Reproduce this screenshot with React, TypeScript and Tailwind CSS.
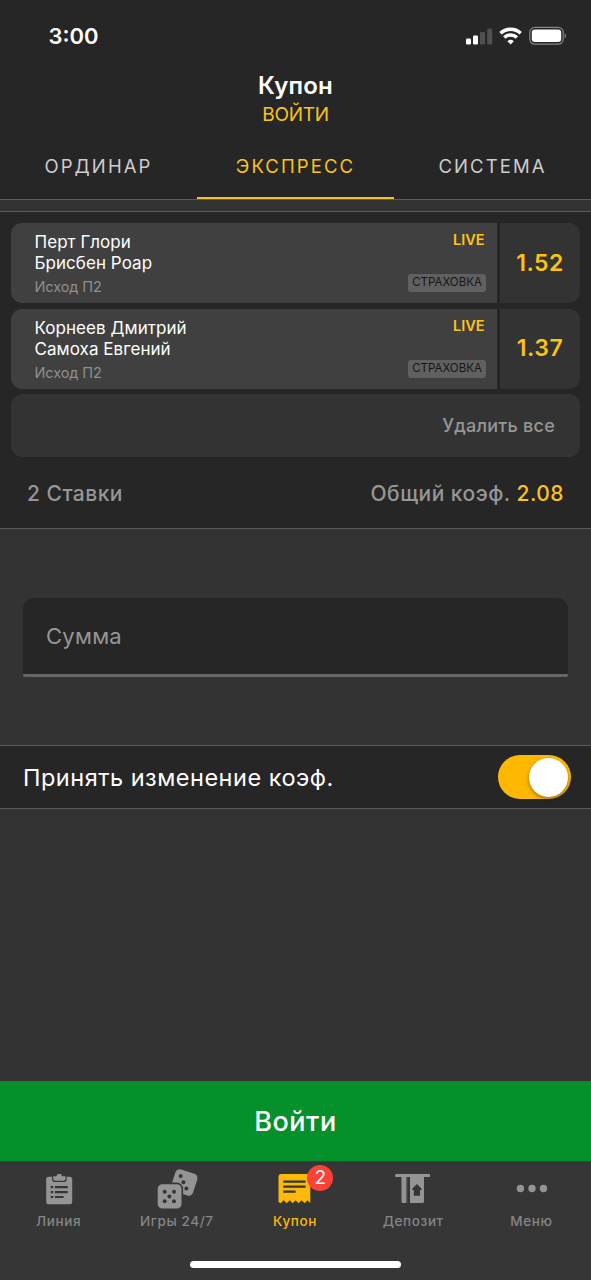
import React, { useState } from 'react';
import clsx from 'clsx';

interface Bet {
  id: number;
  home: string;
  away: string;
  outcome: string;
  odds: string;
}

const bets: Bet[] = [
  { id: 1, home: 'Перт Глори', away: 'Брисбен Роар', outcome: 'Исход П2', odds: '1.52' },
  { id: 2, home: 'Корнеев Дмитрий', away: 'Самоха Евгений', outcome: 'Исход П2', odds: '1.37' }
];

const tabs = [
  { id: 'single', label: 'ОРДИНАР' },
  { id: 'express', label: 'ЭКСПРЕСС' },
  { id: 'system', label: 'СИСТЕМА' }
];

function StatusBar() {
  return (
    <div className="flex h-[72px] items-center justify-between pl-[48.5px] pr-[24px]">
      <span className="text-[22px] font-semibold text-white">3:00</span>
      <div className="flex items-center">
        <svg className="mr-[5px]" width="28" height="20" viewBox="0 0 28 20">
          <rect x="0" y="12.5" width="5" height="6" rx="1.3" fill="#fff" />
          <rect x="7" y="9.5" width="5" height="9" rx="1.3" fill="#fff" />
          <rect x="14" y="6" width="5" height="12.5" rx="1.3" fill="#505050" />
          <rect x="21.2" y="2.5" width="5" height="16" rx="1.3" fill="#505050" />
        </svg>
        <svg className="mr-[6px]" width="24" height="20" viewBox="0 0 24 20" fill="none" stroke="#fff" strokeWidth="3.5">
          <path d="M1.5 7.2a14.8 14.8 0 0 1 20.2 0" />
          <path d="M5.3 11.5a9.2 9.2 0 0 1 12.6 0" />
          <path d="M11.6 18.5l-3.2-3.3a4.7 4.7 0 0 1 6.4 0z" fill="#fff" stroke="none" />
        </svg>
        <svg width="38" height="20" viewBox="0 0 38 20">
          <rect x="0.8" y="1.4" width="33.4" height="16.8" rx="5" fill="none" stroke="#858585" strokeWidth="1.2" />
          <rect x="2.8" y="3.5" width="29.4" height="12.6" rx="3" fill="#fff" />
          <path d="M35.7 7.3c1.7.6 1.7 4.4 0 5z" fill="#858585" />
        </svg>
      </div>
    </div>
  );
}

function BetCard({ bet }: { bet: Bet }) {
  return (
    <div className="flex h-20 gap-[3px] overflow-hidden rounded-[11px]">
      <div className="flex flex-1 justify-between bg-[#404040] pl-[23.5px] pr-[11px]">
        <div className="pt-[9px]">
          <p className="text-[17px] leading-[21px] tracking-[0.05px] text-white">{bet.home}</p>
          <p className="text-[17px] leading-[21px] tracking-[0.05px] text-white">{bet.away}</p>
          <p className="mt-[4px] text-[14.5px] leading-[18px] tracking-[-0.1px] text-[#8f8f8f]">{bet.outcome}</p>
        </div>
        <div className="flex flex-col items-end justify-between pt-[8px] pb-[11px]">
          <span className="pr-[1.5px] text-[14.5px] leading-[18px] font-semibold text-[#fcc419]">LIVE</span>
          <span className="flex h-[18px] w-[78px] items-center justify-center rounded-[3px] bg-[#606060] text-[11.5px] text-[#161616]">
            СТРАХОВКА
          </span>
        </div>
      </div>
      <div className="flex w-[80px] items-center justify-center bg-[#333] text-[23px] font-semibold tracking-[0.5px] text-[#fdc30f]">
        {bet.odds}
      </div>
    </div>
  );
}

function LineIcon() {
  return (
    <svg width="48" height="44" viewBox="0 0 48 44">
      <rect x="11.2" y="10.7" width="26" height="27.5" rx="2.5" fill="#949494" />
      <path d="M17.2 10V13.5a2.5 2.5 0 0 0 2.5 2.5h9.4a2.5 2.5 0 0 0 2.5-2.5V10z" fill="#363636" />
      <path d="M18.3 10.300h3a3.100 3.100 0 0 1 6.100 0H30.500V12.800a2 2 0 0 1-2 2h-8.200a2 2 0 0 1-2-2z" fill="#949494" />
      <path d="M15.7 21.2h2.6m1.7 0h12.800M15.7 26.1h2.6m1.7 0h12.800M15.7 31h2.6m1.7 0h8.6" stroke="#363636" strokeWidth="2.2" fill="none" />
    </svg>
  );
}

function DiceIcon() {
  return (
    <svg width="48" height="44" viewBox="0 0 48 44" fill="#949494">
      <rect x="19.7" y="5" width="23" height="23" rx="4.5" transform="rotate(18 31.2 16.5)" />
      <g fill="#363636">
        <circle cx="27.7" cy="10" r="2" />
        <circle cx="30.4" cy="16.3" r="2" />
        <circle cx="33.4" cy="22.5" r="2" />
      </g>
      <rect x="3.9" y="17.4" width="25.4" height="26" rx="5.5" stroke="#363636" strokeWidth="1.6" />
      <g fill="#363636">
        <circle cx="11.7" cy="25.7" r="2" />
        <circle cx="21" cy="25.7" r="2" />
        <circle cx="16.4" cy="30.5" r="2" />
        <circle cx="11.7" cy="35.3" r="2" />
        <circle cx="21" cy="35.3" r="2" />
      </g>
    </svg>
  );
}

function CouponIcon() {
  return (
    <svg width="48" height="44" viewBox="0 0 48 44">
      <path d="M10.5 8H39.3V37L36.5 34.3L33.6 37.2L30.7 34.3L27.6 37.2L24.6 34.3L21.7 37.2L18.7 34.3L15.7 37.2L12.7 34.3L9.7 37.2L7.5 36V11a3 3 0 0 1 3-3z" fill="#fdb90a" />
      <path d="M12.3 15.7H34.6M12.3 20.7H34.6M12.3 25.7H24.6" stroke="#363636" strokeWidth="2.2" />
    </svg>
  );
}

function DepositIcon() {
  return (
    <svg width="48" height="44" viewBox="0 0 48 44" fill="#949494">
      <path d="M5.3 8H40V11H5.3z" />
      <path d="M11.5 11H16.3V37H13a1.5 1.5 0 0 1-1.5-1.5z" />
      <path d="M16.3 11H17.4V37H16.3z" fill="#5f5f5f" />
      <path d="M20 11H34V35.5a1.5 1.5 0 0 1-1.5 1.5H20z" />
      <path d="M26.9 18L31.6 22.8V24H30V29.8H23.8V24H22.200V22.8z" fill="#363636" />
    </svg>
  );
}

function MenuIcon() {
  return (
    <svg width="48" height="44" viewBox="0 0 48 44" fill="#949494">
      <circle cx="12.4" cy="22.5" r="3.7" />
      <circle cx="24" cy="22.5" r="3.7" />
      <circle cx="35.5" cy="22.5" r="3.7" />
    </svg>
  );
}

const navItems = [
  { id: 'line', label: 'Линия', icon: LineIcon },
  { id: 'games', label: 'Игры 24/7', icon: DiceIcon },
  { id: 'coupon', label: 'Купон', icon: CouponIcon, badge: 2 },
  { id: 'deposit', label: 'Депозит', icon: DepositIcon },
  { id: 'menu', label: 'Меню', icon: MenuIcon }
];

export default function App() {
  const [activeTab, setActiveTab] = useState('express');
  const [acceptChanges, setAcceptChanges] = useState(true);

  return (
    <div className="flex h-[1280px] w-[591px] flex-col overflow-hidden bg-[#333] font-['Inter',sans-serif]">
      <header className="flex h-[200px] flex-col border-b border-[#5c5c5c] bg-[#262626]">
        <StatusBar />
        <div className="text-center">
          <h1 className="text-[24px] leading-[28px] font-semibold tracking-[0.2px] text-white">Купон</h1>
          <button className="block w-full text-[19px] leading-[30px] tracking-[-0.3px] text-[#fcc419]">ВОЙТИ</button>
        </div>
        <nav className="grid flex-1 grid-cols-3">
          {tabs.map((tab) => (
            <button
              key={tab.id}
              onClick={() => setActiveTab(tab.id)}
              className={clsx(
                'border-b-2 pt-[6px] text-[18.5px] tracking-[2.1px]',
                activeTab === tab.id ? 'border-[#f5c02c] text-[#fcc419]' : 'border-transparent text-[#cdcdcd]'
              )}
            >
              {tab.label}
            </button>
          ))}
        </nav>
      </header>

      <section className="mt-[11px] h-[318px] border-y border-[#5c5c5c] bg-[#262626] px-[11px] pt-[11px]">
        <div className="space-y-[5.5px]">
          {bets.map((bet) => (
            <BetCard key={bet.id} bet={bet} />
          ))}
          <div className="flex h-[63px] items-center justify-end rounded-[11px] bg-[#333] pr-[25px]">
            <button className="text-[18px] font-medium tracking-[0.25px] text-[#969696]">Удалить все</button>
          </div>
        </div>
        <div className="flex h-[73px] items-center justify-between px-[16px] text-[21px] font-medium tracking-[0.48px] text-[#969696]">
          <span>2 Ставки</span>
          <span>
            Общий коэф. <span className="text-[#fcc419]">2.08</span>
          </span>
        </div>
      </section>

      <div className="h-[216px] px-[23px] pt-[69px]">
        <input
          type="text"
          placeholder="Сумма"
          className="block h-[79px] w-full rounded-t-[11px] rounded-b-[2px] border-b-[3px] border-[#666] bg-[#262626] px-[23px] text-[22px] tracking-[0.25px] outline-none placeholder:text-[#969696]"
        />
      </div>

      <div className="flex h-[64px] items-center justify-between border-y border-[#5c5c5c] bg-[#262626] pl-[23px] pr-[20px]">
        <span className="pt-px text-[23.5px] tracking-[0.5px] text-white">Принять изменение коэф.</span>
        <button
          role="switch"
          aria-checked={acceptChanges}
          onClick={() => setAcceptChanges(!acceptChanges)}
          className={clsx(
            'flex h-[44px] w-[73px] items-center rounded-full px-[3px]',
            acceptChanges ? 'justify-end bg-[#ffb800]' : 'justify-start bg-[#666]'
          )}
        >
          <span className="h-[39px] w-[39px] rounded-full bg-white shadow-[0_2px_4px_rgba(0,0,0,0.35)]" />
        </button>
      </div>

      <div className="flex-1" />

      <button className="h-[80px] bg-[#04912b] pt-[2px] text-[27px] font-medium tracking-[0.5px] text-white">Войти</button>

      <footer className="flex h-[119px] flex-col items-center border-t border-[#2c4a33] bg-[#363636]">
        <nav className="grid w-full grid-cols-5 pt-[4px]">
          {navItems.map((item) => {
            const Icon = item.icon;
            return (
              <button
                key={item.id}
                className={clsx(
                  'relative flex flex-col items-center text-[13.5px] leading-[22px] font-medium tracking-[0.6px]',
                  item.badge ? 'text-[#fcb90f]' : 'text-[#858585]'
                )}
              >
                <Icon />
                {item.badge && (
                  <span className="absolute top-[-1px] left-[71px] flex h-[26px] w-[26px] items-center justify-center rounded-full bg-[#fb4238] text-[19px] font-normal tracking-normal text-white">
                    {item.badge}
                  </span>
                )}
                <span className="pr-px">{item.label}</span>
              </button>
            );
          })}
        </nav>
        <div className="mt-[29px] h-[7px] w-[211px] rounded-full bg-white" />
      </footer>
    </div>
  );
}
